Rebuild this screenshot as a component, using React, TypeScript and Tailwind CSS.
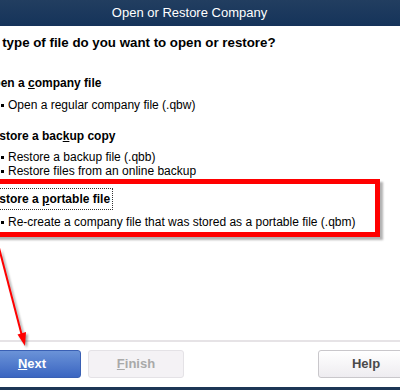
import React from "react";

const font = { fontFamily: '"Liberation Sans", Arial, sans-serif' };

function Bullet({ children }: { children: React.ReactNode }) {
  return (
    <div className="flex items-center h-[14px] text-[12px] leading-[14px] text-black whitespace-nowrap">
      <span className="ml-[1px] w-[3px] h-[3px] bg-black" />
      <span className="ml-[4px]">{children}</span>
    </div>
  );
}

function OptionLabel({ children }: { children: React.ReactNode }) {
  return (
    <div className="-ml-[16px] h-[16px] leading-[16px] text-[12px] font-bold text-black whitespace-nowrap">
      {children}
    </div>
  );
}

function RedArrow() {
  return (
    <svg
      className="absolute left-0 top-0 pointer-events-none drop-shadow-[2px_2px_1px_rgba(0,0,0,0.35)]"
      width="400"
      height="390"
      viewBox="0 0 400 390"
    >
      <line x1="-1" y1="248" x2="22" y2="336" stroke="#ff0000" strokeWidth="2" />
      <polygon points="25,346 26,332 17.5,334.5" fill="#ff0000" />
    </svg>
  );
}

export default function App() {
  return (
    <div
      className="relative w-[400px] h-[390px] overflow-hidden bg-white flex flex-col"
      style={font}
    >
      {/* title bar */}
      <div className="h-[26px] shrink-0 flex items-center justify-center pr-[21px] bg-gradient-to-b from-[#223e60] to-[#15335a] text-white text-[13px]">
        Open or Restore Company
      </div>

      {/* body */}
      <div className="flex-1 flex flex-col overflow-hidden">
        <div className="mt-[8px] -ml-[34px] h-[18px] leading-[18px] text-[13.3px] font-bold text-black whitespace-nowrap">
          What type of file do you want to open or restore?
        </div>

        <div className="mt-[23px]">
          <OptionLabel>
            Open a <span className="underline">c</span>ompany file
          </OptionLabel>
        </div>
        <div className="mt-[7px]">
          <Bullet>Open a regular company file (.qbw)</Bullet>
        </div>

        <div className="mt-[16px]">
          <OptionLabel>
            Restore a bac<span className="underline">k</span>up copy
          </OptionLabel>
        </div>
        <div className="mt-[6px]">
          <Bullet>Restore a backup file (.qbb)</Bullet>
          <Bullet>Restore files from an online backup</Bullet>
        </div>

        <div className="mt-[1px] -ml-[24px] mr-[20px] border-[5px] border-[#ff0000] shadow-[3px_3px_2px_rgba(0,0,0,0.3)] pt-[4px] pb-[3px] pl-[19px]">
          <div className="-ml-[19px] w-fit h-[22px] px-[2px] leading-[20px] border border-dotted border-[#333] text-[12px] font-bold text-black whitespace-nowrap">
            <span>
              Restore a <span className="underline">p</span>ortable file
            </span>
          </div>
          <div className="mt-[5px]">
            <Bullet>Re-create a company file that was stored as a portable file (.qbm)</Bullet>
          </div>
        </div>
      </div>

      {/* footer */}
      <div className="h-[2px] shrink-0 bg-[#e6e3e6]" />
      <div className="mt-[8px] h-[28px] shrink-0 flex items-stretch overflow-hidden">
        <button className="-ml-[17px] w-[98px] rounded-[3px] border border-[#3a60b4] bg-gradient-to-b from-[#6b93d8] to-[#3b65c1] text-white text-[13px] font-bold">
          <span className="underline">N</span>ext
        </button>
        <button className="ml-[7px] w-[96px] rounded-[3px] border border-[#e4e2e6] bg-[#f4f2f5] text-[#a9a9a9] text-[13px] font-bold">
          <span className="underline">F</span>inish
        </button>
        <button className="ml-auto -mr-[14px] w-[96px] rounded-[3px] border border-[#c9c7cb] bg-gradient-to-b from-white to-[#eeecf0] text-[#4a4a4a] text-[13px] font-bold">
          Help
        </button>
      </div>
      <div className="mt-[9px] h-[3px] shrink-0 bg-[#1d3656]" />

      <RedArrow />
    </div>
  );
}
